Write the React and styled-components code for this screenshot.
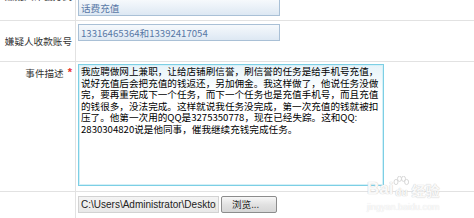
import React from 'react';
import styled, { createGlobalStyle } from 'styled-components';

const GlobalStyle = createGlobalStyle`
  html, body {
    margin: 0;
    padding: 0;
    background: #fff;
  }
  body {
    font-family: "Noto Sans CJK SC", "Liberation Sans", sans-serif;
  }
`;

const Page = styled.div`
  position: relative;
  width: 474px;
  height: 218px;
  overflow: hidden;
`;

const Form = styled.div`
  margin-top: -21px;
`;

const Row = styled.div`
  display: grid;
  grid-template-columns: 76px 1fr;
  height: ${({ $h }) => $h}px;
  box-sizing: border-box;
  border-bottom: 1px solid #e2e2e2;
`;

// $pt: when set, label sits at the top of the cell with that padding
const Label = styled.div`
  display: flex;
  justify-content: flex-end;
  align-items: ${({ $pt }) => ($pt != null ? 'flex-start' : 'center')};
  padding: ${({ $pt }) => ($pt != null ? `${$pt}px 3px 0 0` : '0 3px 0 0')};
  border-right: 1px solid #e2e2e2;
  font-size: 9.6px;
  line-height: 12px;
  color: #333;
  white-space: nowrap;
`;

const Star = styled.span`
  color: #e8302c;
  margin-left: 4px;
  font-family: "Liberation Sans", Arial, sans-serif;
  font-weight: bold;
  font-size: 11px;
  line-height: 10px;
`;

const Value = styled.div`
  display: flex;
  align-items: flex-start;
  gap: 2px;
  padding: ${({ $pt }) => $pt}px 0 0 2px;
`;

const TextInput = styled.input`
  box-sizing: border-box;
  width: 202px;
  height: 17px;
  padding: 0 2px;
  border: 1px solid #a9c0d6;
  background: linear-gradient(to bottom, #f6f9fc, #dde8f3);
  color: #5878a6;
  font-family: "Noto Sans CJK SC", sans-serif;
  font-size: 9.6px;
  outline: none;
`;

const Area = styled.textarea`
  box-sizing: border-box;
  width: 306px;
  height: 122px;
  padding: 1px 2px;
  margin: 0;
  border: 1px solid #7ccfe5;
  box-shadow: inset 0 0 0 1px #d4f0f7;
  background: linear-gradient(to bottom, #e6f3f9, #ffffff 28px);
  color: #000;
  font-family: "Noto Sans CJK SC", sans-serif;
  font-size: 9.6px;
  line-height: 11.6px;
  resize: none;
  overflow: hidden;
  outline: none;
`;

const FilePath = styled.input`
  box-sizing: border-box;
  width: 141px;
  height: 17px;
  padding: 0 2px;
  border: 1px solid #d2d2d2;
  background: linear-gradient(to bottom, #f4f4f4, #e8e8e8);
  color: #222;
  font-family: "Liberation Sans", Arial, sans-serif;
  font-size: 10px;
  outline: none;
`;

const Browse = styled.button`
  box-sizing: border-box;
  width: 56px;
  height: 17px;
  padding: 0 0 0 10px;
  border: 1px solid #8c8c8c;
  border-radius: 2px;
  background: linear-gradient(to bottom, #f7f7f7, #e2e2e2 50%, #d6d6d6);
  color: #222;
  font-family: "Noto Sans CJK SC", sans-serif;
  font-size: 9.6px;
  line-height: 15px;
  text-align: left;
`;

const Watermark = styled.div`
  position: absolute;
  left: 367px;
  top: 176px;
  display: flex;
  flex-direction: column;
  color: rgba(255, 255, 255, 0.9);
  text-shadow: 0 0 1px #cfcfcf, 0 0 1px #cfcfcf;
  pointer-events: none;
`;

const MarkTop = styled.div`
  display: flex;
  align-items: flex-end;
  font-family: "Liberation Sans", Arial, sans-serif;
  font-weight: bold;
  font-size: 17px;
  line-height: 18px;
`;

const Paw = styled.span`
  position: relative;
  display: inline-flex;
  align-items: flex-end;
  justify-content: center;
  width: 16px;
  height: 22px;
  font-size: 10px;
  line-height: 11px;
`;

const PawIcon = styled.svg`
  position: absolute;
  left: 0;
  top: 0;
`;

const MarkCn = styled.span`
  font-family: "Noto Sans CJK SC", sans-serif;
  font-size: 14px;
  line-height: 16px;
  margin-left: 2px;
`;

const MarkUrl = styled.div`
  font-family: "Liberation Sans", Arial, sans-serif;
  font-size: 9px;
  line-height: 10px;
  margin-top: 4px;
  color: rgba(255, 255, 255, 0.9);
  text-shadow: 0 0 1px #d4d4d4;
`;

// zero-width space after "QQ:" so the line breaks there, as in the original
const story =
  '我应聘做网上兼职，让给店铺刷信誉，刷信誉的任务是给手机号充值，说好充值后会把充值的钱返还，另加佣金。我这样做了，他说任务没做完，要再重完成下一个任务，而下一个任务也是充值手机号，而且充值的钱很多，没法完成。这样就说我任务没完成，第一次充值的钱就被扣压了。他第一次用的QQ是3275350778，现在已经失踪。这和QQ:\u200B2830304820说是他同事，催我继续充钱完成任务。';

export default function App() {
  return (
    <Page>
      <GlobalStyle />
      <Form>
        <Row $h={42}>
          <Label $pt={11}>嫌疑人诈骗方式</Label>
          <Value $pt={20}>
            <TextInput defaultValue="话费充值" />
          </Value>
        </Row>
        <Row $h={41}>
          <Label>嫌疑人收款账号</Label>
          <Value $pt={3}>
            <TextInput defaultValue="13316465364和13392417054" />
          </Value>
        </Row>
        <Row $h={130}>
          <Label $pt={5}>
            事件描述<Star>*</Star>
          </Label>
          <Value $pt={2}>
            <Area defaultValue={story} />
          </Value>
        </Row>
        <Row $h={60}>
          <Label />
          <Value $pt={4}>
            <FilePath readOnly value="C:\Users\Administrator\Desktop\截图.jpg" />
            <Browse type="button">浏览...</Browse>
          </Value>
        </Row>
      </Form>
      <Watermark>
        <MarkTop>
          Bai
          <Paw>
            <PawIcon width="16" height="22" viewBox="0 0 16 22">
              <g fill="#fff" stroke="#cfcfcf" strokeWidth="0.8">
                <ellipse cx="3" cy="6" rx="2" ry="2.6" />
                <ellipse cx="6.5" cy="2.8" rx="2" ry="2.6" />
                <ellipse cx="10.5" cy="2.8" rx="2" ry="2.6" />
                <ellipse cx="13.6" cy="6" rx="2" ry="2.6" />
              </g>
            </PawIcon>
            du
          </Paw>
          <MarkCn>经验</MarkCn>
        </MarkTop>
        <MarkUrl>jingyan.baidu.com</MarkUrl>
      </Watermark>
    </Page>
  );
}
